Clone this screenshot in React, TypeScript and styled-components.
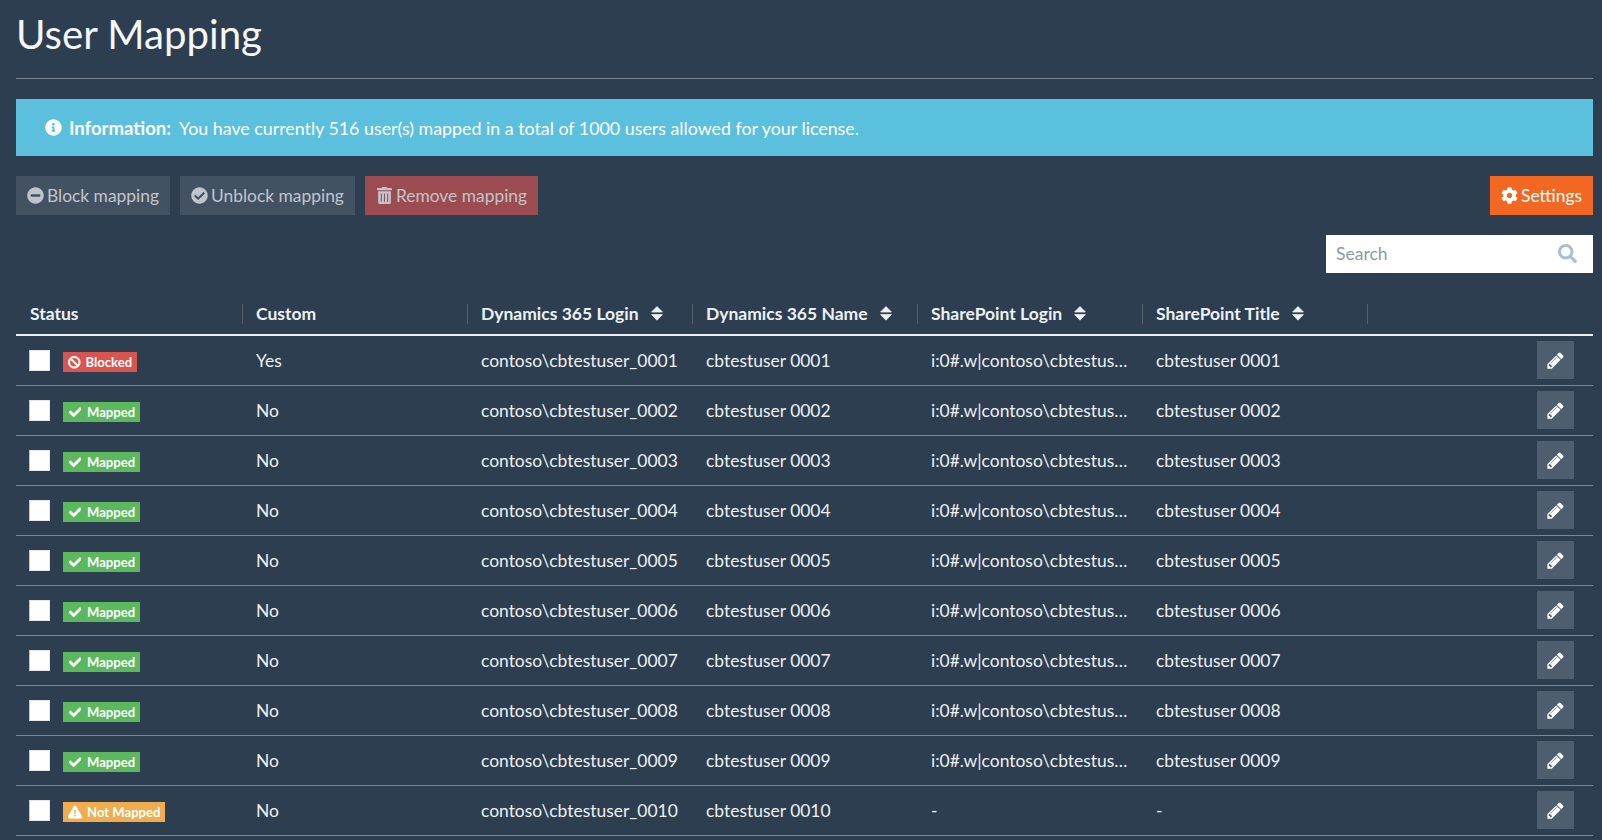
import { createGlobalStyle, styled } from "styled-components";
import {
  FaBan,
  FaCheck,
  FaCheckCircle,
  FaCog,
  FaExclamationTriangle,
  FaInfoCircle,
  FaMinusCircle,
  FaSearch,
  FaTrashAlt,
} from "react-icons/fa";

const GlobalStyle = createGlobalStyle`
  html, body {
    margin: 0;
    height: 840px;
    overflow: hidden;
    background: #2c3e50;
  }
  body {
    font-family: Lato, "Liberation Sans", sans-serif;
    font-size: 17.4px;
    color: #fff;
  }
  * {
    box-sizing: border-box;
  }
`;

const Page = styled.div`
  width: 1602px;
  padding: 0 9px 0 16px;
`;

const Title = styled.h1`
  margin: 0;
  height: 79px;
  padding: 10px 0 0;
  font-size: 40.2px;
  line-height: 47px;
  font-weight: 400;
  color: #f4f6f7;
  border-bottom: 1px solid #7b8794;
`;

const Alert = styled.div`
  margin-top: 20px;
  height: 57px;
  padding-left: 29px;
  display: flex;
  align-items: center;
  background: #5bc0de;
  color: #fff;
  font-size: 17.82px;
  svg {
    font-size: 17px;
    margin-right: 7px;
  }
  b {
    font-size: 18.5px;
    margin-right: 8px;
  }
`;

const Toolbar = styled.div`
  margin-top: 20px;
  display: flex;
  gap: 10px;
`;

const Button = styled.button<{ $kind: "default" | "danger" | "orange" }>`
  height: 39px;
  padding: 0 11px;
  display: flex;
  align-items: center;
  gap: 3px;
  border: 0;
  font: inherit;
  font-size: 17.4px;
  background: ${(p) =>
    p.$kind === "danger" ? "#9c4b50" : p.$kind === "orange" ? "#f26722" : "#435263"};
  color: ${(p) => (p.$kind === "orange" ? "#fff" : "#c0c5cb")};
  ${(p) => (p.$kind === "orange" ? "margin-left: auto;" : "")}
  svg {
    font-size: 17px;
  }
`;

const SearchRow = styled.div`
  margin-top: 20px;
  display: flex;
  justify-content: flex-end;
`;

const SearchBox = styled.div`
  width: 267px;
  height: 38px;
  padding: 0 16px 2px 10px;
  display: flex;
  align-items: center;
  justify-content: space-between;
  background: #fff;
  color: #8a9aa8;
  font-size: 17.5px;
  svg {
    color: #acbdcc;
    font-size: 19px;
  }
`;

const Table = styled.table`
  margin-top: 24px;
  width: 100%;
  table-layout: fixed;
  border-collapse: collapse;
`;

const HeadCell = styled.th`
  height: 38px;
  padding: 0 0 4px 13px;
  text-align: left;
  font-size: 17.5px;
  font-weight: 700;
  color: #ecf0f1;
  border-bottom: 2px solid #ecf0f1;
  width: 225px;
  white-space: nowrap;
  &:first-child {
    width: 227px;
  }
  &:first-child > span {
    padding-left: 14px;
  }
  & > span {
    display: flex;
    align-items: center;
    gap: 12px;
    height: 20px;
    margin-left: -13px;
    padding-left: 13px;
    border-right: 1px solid #56636f;
  }
  &:last-child {
    width: auto;
  }
  &:last-child > span {
    border-right: 0;
  }
`;

const SortSvg = styled.svg`
  width: 12px;
  height: 15px;
  fill: #ecf0f1;
  stroke: #ecf0f1;
  stroke-width: 0.8;
  stroke-linejoin: round;
`;

const Row = styled.tr`
  height: 50px;
  border-bottom: 1px solid #7b8794;
`;

const Cell = styled.td`
  padding: 0 13px;
  font-size: 17.45px;
  color: #ecf0f1;
  white-space: nowrap;
  overflow: hidden;
  text-overflow: ellipsis;
`;

const StatusWrap = styled.div`
  display: flex;
  align-items: center;
  gap: 13px;
`;

const Check = styled.span`
  display: block;
  width: 21px;
  height: 21px;
  background: #fff;
  border: 1px solid #e4e8ec;
  border-left-color: #a9c6e4;
`;

const Badge = styled.span<{ $color: string; $icon: number; $side?: number }>`
  display: inline-flex;
  align-items: center;
  gap: 5px;
  height: 20px;
  margin-top: 4px;
  padding: 0 5px;
  background: ${(p) => p.$color};
  color: #fff;
  font-size: 13.1px;
  font-weight: 700;
  svg {
    font-size: ${(p) => p.$icon}px;
    margin: 0 ${(p) => p.$side ?? 0}px;
    stroke-width: 20;
  }
`;

const EditButton = styled.button`
  display: flex;
  align-items: center;
  justify-content: center;
  width: 37px;
  height: 38px;
  padding: 0;
  margin-left: auto;
  margin-right: 6px;
  border: 0;
  background: #4e5e6e;
  color: #fff;
`;

const PencilSvg = styled.svg`
  width: 19px;
  height: 19px;
  fill: currentColor;
`;

const SortIcon = () => (
  <SortSvg viewBox="0 0 12 15">
    <path d="M6 0.6 L11.4 6 H0.6 Z" />
    <path d="M0.6 8.6 H11.4 L6 14.2 Z" />
  </SortSvg>
);

const PencilIcon = () => (
  <PencilSvg viewBox="0 0 1792 1792">
    <path d="M491 1536l91-91-235-235-91 91v107h128v128h107zm523-928q0-22-22-22-10 0-17 7l-542 542q-7 7-7 17 0 22 22 22 10 0 17-7l542-542q7-7 7-17zm-54-192l416 416-832 832h-416v-416zm683 96q0 53-37 90l-166 166-416-416 166-165q36-38 90-38 53 0 91 38l235 234q37 39 37 91z" />
  </PencilSvg>
);

type Status = "Blocked" | "Mapped" | "Not Mapped";

type User = {
  id: string;
  status: Status;
  custom: string;
  spLogin: string;
  spTitle: string;
};

const users: User[] = Array.from({ length: 10 }, (_, i) => {
  const id = String(i + 1).padStart(4, "0");
  const mapped = i < 9;
  return {
    id,
    status: i === 0 ? "Blocked" : mapped ? "Mapped" : "Not Mapped",
    custom: i === 0 ? "Yes" : "No",
    spLogin: mapped ? "i:0#.w|contoso\\cbtestuser_" + id : "-",
    spTitle: mapped ? `cbtestuser ${id}` : "-",
  };
});

const StatusBadge = ({ status }: { status: Status }) => {
  if (status === "Blocked") {
    return (
      <Badge $color="#d9534f" $icon={12.5}>
        <FaBan /> Blocked
      </Badge>
    );
  }
  if (status === "Mapped") {
    return (
      <Badge $color="#5cb85c" $icon={12.5} $side={0.75}>
        <FaCheck /> Mapped
      </Badge>
    );
  }
  return (
    <Badge $color="#f0ad4e" $icon={14}>
      <FaExclamationTriangle /> Not Mapped
    </Badge>
  );
};

const App = () => {
  return (
    <Page>
      <GlobalStyle />
      <Title>User Mapping</Title>
      <Alert>
        <FaInfoCircle />
        <b>Information:</b>
        You have currently 516 user(s) mapped in a total of 1000 users allowed for your license.
      </Alert>
      <Toolbar>
        <Button $kind="default">
          <FaMinusCircle /> Block mapping
        </Button>
        <Button $kind="default">
          <FaCheckCircle /> Unblock mapping
        </Button>
        <Button $kind="danger">
          <FaTrashAlt /> Remove mapping
        </Button>
        <Button $kind="orange">
          <FaCog /> Settings
        </Button>
      </Toolbar>
      <SearchRow>
        <SearchBox>
          Search
          <FaSearch />
        </SearchBox>
      </SearchRow>
      <Table>
        <thead>
          <tr>
            <HeadCell><span>Status</span></HeadCell>
            <HeadCell><span>Custom</span></HeadCell>
            <HeadCell><span>Dynamics 365 Login <SortIcon /></span></HeadCell>
            <HeadCell><span>Dynamics 365 Name <SortIcon /></span></HeadCell>
            <HeadCell><span>SharePoint Login <SortIcon /></span></HeadCell>
            <HeadCell><span>SharePoint Title <SortIcon /></span></HeadCell>
            <HeadCell><span /></HeadCell>
          </tr>
        </thead>
        <tbody>
          {users.map((u) => (
            <Row key={u.id}>
              <Cell>
                <StatusWrap>
                  <Check />
                  <StatusBadge status={u.status} />
                </StatusWrap>
              </Cell>
              <Cell>{u.custom}</Cell>
              <Cell>contoso\cbtestuser_{u.id}</Cell>
              <Cell>cbtestuser {u.id}</Cell>
              <Cell>{u.spLogin}</Cell>
              <Cell>{u.spTitle}</Cell>
              <Cell>
                <EditButton>
                  <PencilIcon />
                </EditButton>
              </Cell>
            </Row>
          ))}
        </tbody>
      </Table>
    </Page>
  );
};

export default App;
